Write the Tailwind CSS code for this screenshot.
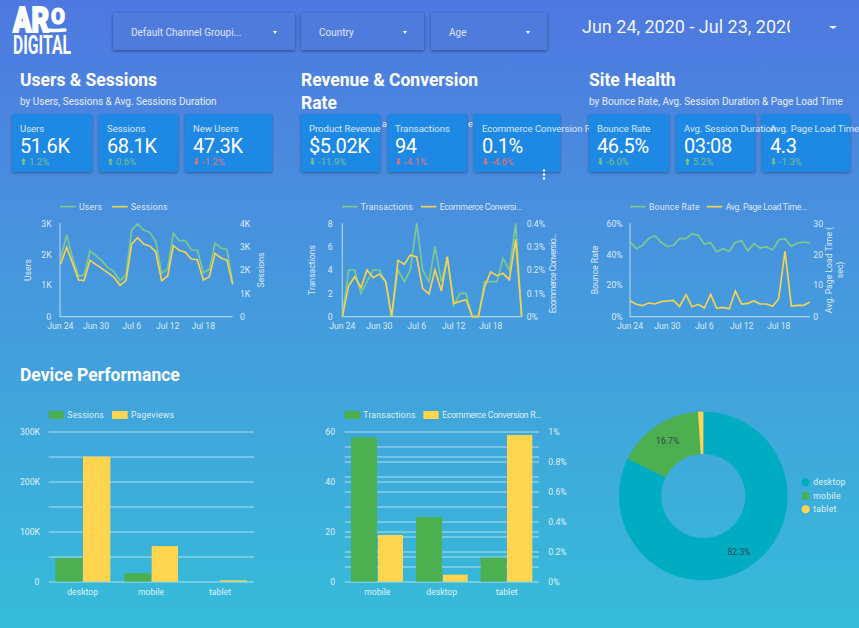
<!DOCTYPE html>
<html>
<head>
<meta charset="utf-8">
<script src="https://cdn.jsdelivr.net/npm/@tailwindcss/browser@4"></script>
</head>
<body class="m-0">
<div class="relative w-[859px] h-[628px] overflow-hidden bg-gradient-to-b from-[#4e78e0] to-[#34bcd8] font-['Roboto',sans-serif] text-white">

  <!-- Header -->
  <header class="flex items-start h-[68px]">
    <svg class="ml-3 mt-[6px] w-[60px] h-[50px] shrink-0 overflow-visible" viewBox="0 0 60 50" aria-label="ARO Digital logo">
      <text x="1" y="26" font-size="35" font-weight="900" fill="#fff" stroke="#fff" stroke-width="1.8" textLength="36" lengthAdjust="spacingAndGlyphs">AR</text>
      <text x="39" y="18" font-size="22" font-weight="900" fill="#fff" stroke="#fff" stroke-width="1" textLength="14" lengthAdjust="spacingAndGlyphs">O</text>
      <path d="M37 24 C43 25.500 49 24 53 24" stroke="#fff" stroke-width="3.500" stroke-linecap="round" fill="none"/>
      <text x="1" y="47.500" font-size="25.500" font-weight="700" fill="#fff" textLength="58" lengthAdjust="spacingAndGlyphs">DIGITAL</text>
    </svg>
    <div class="flex gap-[6px] ml-[41px] mt-[13px]">
      <div class="flex items-center justify-between w-[182px] h-[37px] pt-px pl-[18px] pr-[18px] bg-[#4f7bdd] shadow-[0_1px_3px_rgba(0,0,0,0.4)] text-[10px] text-white/80">
        <span>Default Channel Groupi...</span><span class="w-0 h-0 border-x-[2px] border-x-transparent border-t-[3px] border-t-white"></span>
      </div>
      <div class="flex items-center justify-between w-[123px] h-[37px] pt-px pl-[18px] pr-[17px] bg-[#4f7bdd] shadow-[0_1px_3px_rgba(0,0,0,0.4)] text-[10px] text-white/80">
        <span>Country</span><span class="w-0 h-0 border-x-[2px] border-x-transparent border-t-[3px] border-t-white"></span>
      </div>
      <div class="flex items-center justify-between w-[116px] h-[37px] ml-[1px] pt-px pl-[18px] pr-[17px] bg-[#4f7bdd] shadow-[0_1px_3px_rgba(0,0,0,0.4)] text-[10px] text-white/80">
        <span>Age</span><span class="w-0 h-0 border-x-[2px] border-x-transparent border-t-[3px] border-t-white"></span>
      </div>
    </div>
    <div class="ml-[35px] mt-[16px] w-[208px] h-[22px] overflow-hidden whitespace-nowrap text-[18px] leading-[22px] text-white/95">Jun 24, 2020 - Jul 23, 2020</div>
    <span class="ml-[39px] mt-[26px] w-0 h-0 border-x-[4px] border-x-transparent border-t-[3px] border-t-white"></span>
  </header>

  <!-- KPI sections -->
  <section class="flex h-[104px]">
    <div class="w-[301px] shrink-0">
      <div class="h-[46px] pl-5 pt-px">
        <h2 class="text-[17.5px] leading-[23px] font-bold">Users &amp; Sessions</h2>
        <p class="mt-[2px] text-[10px] leading-[16px] text-white/85">by Users, Sessions &amp; Avg. Sessions Duration</p>
      </div>
      <div class="flex pl-3 gap-[7px]">
        <div class="w-[80px] h-[58px] shrink-0 pl-2 pt-[9px] bg-[#1e88e5] rounded-[2px] shadow-[0_1px_3px_rgba(0,0,0,0.35)] whitespace-nowrap">
          <div class="text-[9.5px] leading-[12px] text-white/80">Users</div>
          <div class="text-[20px] leading-[23px] tracking-[-0.4px]">51.6K</div>
          <div class="flex items-center gap-[3px] -mt-[2px] pl-[1px] text-[9.5px] leading-[11px] text-[#74c487]"><svg class="w-[5px] h-[7px]" viewBox="0 0 5 7"><path d="M2.500 0 5 3H3.600V7H1.400V3H0Z" fill="#74c487"/></svg>1.2%</div>
        </div>
        <div class="w-[79px] h-[58px] shrink-0 pl-2 pt-[9px] bg-[#1e88e5] rounded-[2px] shadow-[0_1px_3px_rgba(0,0,0,0.35)] whitespace-nowrap">
          <div class="text-[9.5px] leading-[12px] text-white/80">Sessions</div>
          <div class="text-[20px] leading-[23px] tracking-[-0.4px]">68.1K</div>
          <div class="flex items-center gap-[3px] -mt-[2px] pl-[1px] text-[9.5px] leading-[11px] text-[#74c487]"><svg class="w-[5px] h-[7px]" viewBox="0 0 5 7"><path d="M2.500 0 5 3H3.600V7H1.400V3H0Z" fill="#74c487"/></svg>0.6%</div>
        </div>
        <div class="w-[87px] h-[58px] shrink-0 pl-2 pt-[9px] bg-[#1e88e5] rounded-[2px] shadow-[0_1px_3px_rgba(0,0,0,0.35)] whitespace-nowrap">
          <div class="text-[9.5px] leading-[12px] text-white/80">New Users</div>
          <div class="text-[20px] leading-[23px] tracking-[-0.4px]">47.3K</div>
          <div class="flex items-center gap-[3px] -mt-[2px] pl-[1px] text-[9.5px] leading-[11px] text-[#e57373]"><svg class="w-[5px] h-[7px]" viewBox="0 0 5 7"><path d="M2.500 7 5 4H3.600V0H1.400V4H0Z" fill="#e57373"/></svg>-1.2%</div>
        </div>
      </div>
    </div>

    <div class="w-[288px] shrink-0">
      <div class="h-[46px] pt-px">
        <h2 class="w-[200px] text-[17.5px] leading-[23px] font-bold">Revenue &amp; Conversion Rate</h2>
      </div>
      <div class="flex gap-[7px]">
        <div class="relative w-[79px] h-[58px] shrink-0 mr-[1px] pl-2 pt-[9px] bg-[#1e88e5] rounded-[2px] shadow-[0_1px_3px_rgba(0,0,0,0.35)] whitespace-nowrap">
          <div class="text-[9.5px] leading-[12px] text-white/80">Product Revenue</div>
          <div class="text-[20px] leading-[23px] tracking-[-0.4px]">$5.02K</div>
          <div class="flex items-center gap-[3px] -mt-[2px] pl-[1px] text-[9.5px] leading-[11px] text-[#74c487]"><svg class="w-[5px] h-[7px]" viewBox="0 0 5 7"><path d="M2.500 7 5 4H3.600V0H1.400V4H0Z" fill="#74c487"/></svg>-11.9%</div>
          <span class="absolute left-[81px] top-[5px] text-[9px] leading-[10px] text-white/85">a</span>
        </div>
        <div class="relative w-[79px] h-[58px] shrink-0 pl-[7px] pt-[9px] bg-[#1e88e5] rounded-[2px] shadow-[0_1px_3px_rgba(0,0,0,0.35)] whitespace-nowrap">
          <div class="text-[9.5px] leading-[12px] text-white/80">Transactions</div>
          <div class="text-[20px] leading-[23px] tracking-[-0.4px]">94</div>
          <div class="flex items-center gap-[3px] -mt-[2px] pl-[1px] text-[9.5px] leading-[11px] text-[#e57373]"><svg class="w-[5px] h-[7px]" viewBox="0 0 5 7"><path d="M2.500 7 5 4H3.600V0H1.400V4H0Z" fill="#e57373"/></svg>-4.1%</div>
          <span class="absolute left-[80px] top-[5px] text-[9px] leading-[10px] text-white/85">e</span>
        </div>
        <div class="relative w-[86px] h-[58px] shrink-0 pl-2 pt-[9px] bg-[#1e88e5] rounded-[2px] shadow-[0_1px_3px_rgba(0,0,0,0.35)] whitespace-nowrap">
          <div class="text-[9.5px] leading-[12px] text-white/80">Ecommerce Conversion Rate</div>
          <div class="text-[20px] leading-[23px] tracking-[-0.4px]">0.1%</div>
          <div class="flex items-center gap-[3px] -mt-[2px] pl-[1px] text-[9.5px] leading-[11px] text-[#e57373]"><svg class="w-[5px] h-[7px]" viewBox="0 0 5 7"><path d="M2.500 7 5 4H3.600V0H1.400V4H0Z" fill="#e57373"/></svg>-4.6%</div>
          <svg class="absolute left-[68px] top-[55px] w-[4px] h-[11px]" viewBox="0 0 4 11"><circle cx="2" cy="1.500" r="1.200" fill="#fff"/><circle cx="2" cy="5.500" r="1.200" fill="#fff"/><circle cx="2" cy="9.500" r="1.200" fill="#fff"/></svg>
        </div>
      </div>
    </div>

    <div class="relative w-[270px] shrink-0">
      <div class="h-[46px] pt-px">
        <h2 class="text-[17.5px] leading-[23px] font-bold">Site Health</h2>
        <p class="mt-[2px] text-[10px] leading-[16px] text-white/85 whitespace-nowrap">by Bounce Rate, Avg. Session Duration &amp; Page Load Time</p>
      </div>
      <div class="flex gap-[7px]">
        <div class="w-[80px] h-[58px] shrink-0 pl-2 pt-[9px] bg-[#1e88e5] rounded-[2px] shadow-[0_1px_3px_rgba(0,0,0,0.35)] whitespace-nowrap">
          <div class="text-[9.5px] leading-[12px] text-white/80">Bounce Rate</div>
          <div class="text-[20px] leading-[23px] tracking-[-0.4px]">46.5%</div>
          <div class="flex items-center gap-[3px] -mt-[2px] pl-[1px] text-[9.5px] leading-[11px] text-[#74c487]"><svg class="w-[5px] h-[7px]" viewBox="0 0 5 7"><path d="M2.500 7 5 4H3.600V0H1.400V4H0Z" fill="#74c487"/></svg>-6.0%</div>
        </div>
        <div class="relative z-10 w-[79px] h-[58px] shrink-0 pl-2 pt-[9px] bg-[#1e88e5] rounded-[2px] shadow-[0_1px_3px_rgba(0,0,0,0.35)] whitespace-nowrap">
          <div class="text-[9.5px] leading-[12px] text-white/80">Avg. Session Duration</div>
          <div class="text-[20px] leading-[23px] tracking-[-0.4px]">03:08</div>
          <div class="flex items-center gap-[3px] -mt-[2px] pl-[1px] text-[9.5px] leading-[11px] text-[#74c487]"><svg class="w-[5px] h-[7px]" viewBox="0 0 5 7"><path d="M2.500 0 5 3H3.600V7H1.400V3H0Z" fill="#74c487"/></svg>5.2%</div>
        </div>
        <div class="w-[88px] h-[58px] shrink-0 pl-2 pt-[9px] bg-[#1e88e5] rounded-[2px] shadow-[0_1px_3px_rgba(0,0,0,0.35)] whitespace-nowrap">
          <div class="text-[9.5px] leading-[12px] text-white/80">Avg. Page Load Time</div>
          <div class="text-[20px] leading-[23px] tracking-[-0.4px]">4.3</div>
          <div class="flex items-center gap-[3px] -mt-[2px] pl-[1px] text-[9.5px] leading-[11px] text-[#74c487]"><svg class="w-[5px] h-[7px]" viewBox="0 0 5 7"><path d="M2.500 7 5 4H3.600V0H1.400V4H0Z" fill="#74c487"/></svg>-1.3%</div>
        </div>
      </div>
    </div>
  </section>

  <!-- Line charts -->
  <section class="flex mt-[18px] h-[150px]">
    <svg class="w-[290px] h-[150px] shrink-0" viewBox="0 0 870 450" font-size="26" fill="#fff" fill-opacity="0.82">
      <path d="M180 100V380H698" fill="none" stroke="#fff" stroke-opacity="0.55" stroke-width="3.500"/>
      <polyline fill="none" stroke="#7cc98f" stroke-width="5" points="182,205 200,135 218,205 236,258 252,255 270,183 288,197 305,212 323,232 342,245 360,272 378,255 395,120 413,102 431,120 449,127 467,153 485,250 503,236 520,130 538,152 556,152 574,180 592,180 610,248 628,238 645,160 663,174 681,178 698,280"/>
      <polyline fill="none" stroke="#f5d251" stroke-width="5" points="182,222 200,172 218,220 236,270 252,272 270,211 288,224 305,235 323,248 342,262 360,286 378,272 395,162 413,143 431,162 449,168 467,185 485,272 503,258 520,167 538,181 556,187 574,207 592,209 610,270 628,260 645,190 663,204 681,211 698,283"/>
      <path d="M181 50H228" stroke="#7cc98f" stroke-width="5"/><text x="237" y="59" letter-spacing="0.6">Users</text>
      <path d="M336 50H383" stroke="#f5d251" stroke-width="5"/><text x="393" y="59" letter-spacing="0.6">Sessions</text>
      <g text-anchor="end"><text x="155" y="111">3K</text><text x="155" y="203">2K</text><text x="155" y="295">1K</text><text x="153" y="390">0</text></g>
      <g><text x="720" y="111">4K</text><text x="720" y="181">3K</text><text x="720" y="250">2K</text><text x="720" y="320">1K</text><text x="720" y="390">0</text></g>
      <g text-anchor="middle"><text x="181" y="418">Jun 24</text><text x="288" y="418">Jun 30</text><text x="395" y="418">Jul 6</text><text x="503" y="418">Jul 12</text><text x="610" y="418">Jul 18</text>
        <text transform="translate(92 240) rotate(-90)">Users</text><text transform="translate(792 240) rotate(-90)">Sessions</text></g>
    </svg>
    <svg class="w-[280px] h-[150px] shrink-0" viewBox="0 0 840 450" font-size="26" fill="#fff" fill-opacity="0.82">
      <path d="M157 100V380H695" fill="none" stroke="#fff" stroke-opacity="0.55" stroke-width="3.500"/>
      <polyline fill="none" stroke="#7cc98f" stroke-width="5" points="157,380 176,240 194,240 213,310 231,275 250,240 268,240 287,275 305,380 324,240 343,275 361,240 380,100 398,240 417,275 435,170 454,275 472,205 491,345 510,310 528,310 547,380 565,380 584,275 602,275 621,275 639,205 658,240 677,100 695,380"/>
      <polyline fill="none" stroke="#f5d251" stroke-width="5" points="157,380 176,287 194,260 213,293 231,240 250,263 268,252 287,275 305,380 324,211 343,223 361,195 380,201 398,296 417,312 435,240 454,303 472,200 491,340 510,334 528,329 547,380 565,380 584,290 602,246 621,257 639,250 658,269 677,148 695,380"/>
      <path d="M157 50H203" stroke="#7cc98f" stroke-width="5"/><text x="212" y="59" letter-spacing="0.6">Transactions</text>
      <path d="M393 50H439" stroke="#f5d251" stroke-width="5"/><text x="449" y="59" textLength="248">Ecommerce Conversi...</text>
      <g text-anchor="end"><text x="128" y="111">8</text><text x="128" y="181">6</text><text x="128" y="250">4</text><text x="128" y="320">2</text><text x="128" y="390">0</text></g>
      <g><text x="710" y="111">0.4%</text><text x="710" y="181">0.3%</text><text x="710" y="250">0.2%</text><text x="710" y="320">0.1%</text><text x="710" y="390">0%</text></g>
      <g text-anchor="middle"><text x="157" y="418">Jun 24</text><text x="268" y="418">Jun 30</text><text x="380" y="418">Jul 6</text><text x="491" y="418">Jul 12</text><text x="602" y="418">Jul 18</text>
        <text transform="translate(75 240) rotate(-90)">Transactions</text><text transform="translate(797 250) rotate(-90)" textLength="240">Ecommerce Conversio...</text></g>
    </svg>
    <svg class="w-[289px] h-[150px] shrink-0" viewBox="0 0 867 450" font-size="26" fill="#fff" fill-opacity="0.82">
      <path d="M180 100V380H720" fill="none" stroke="#fff" stroke-opacity="0.55" stroke-width="3.500"/>
      <polyline fill="none" stroke="#7cc98f" stroke-width="5" points="180,155 199,176 217,167 236,145 255,137 273,156 292,170 310,166 329,146 348,146 366,131 385,136 403,163 422,158 440,185 459,176 478,184 496,157 515,152 533,183 552,161 570,174 589,170 608,180 626,150 645,146 664,169 682,159 701,156 720,159"/>
      <polyline fill="none" stroke="#f5d251" stroke-width="5" points="180,332 199,343 217,347 236,339 255,342 273,335 292,333 310,331 329,349 348,314 366,350 385,343 403,354 422,313 440,355 459,352 478,356 496,303 515,342 533,340 552,333 570,342 589,342 608,349 626,326 645,184 664,348 682,346 701,346 720,336"/>
      <path d="M180 50H227" stroke="#7cc98f" stroke-width="5"/><text x="237" y="59" letter-spacing="0.6">Bounce Rate</text>
      <path d="M410 50H457" stroke="#f5d251" stroke-width="5"/><text x="467" y="59" textLength="245">Avg. Page Load Time...</text>
      <g text-anchor="end"><text x="158" y="111">60%</text><text x="158" y="203">40%</text><text x="158" y="295">20%</text><text x="158" y="390">0%</text></g>
      <g><text x="730" y="111">30</text><text x="730" y="203">20</text><text x="730" y="295">10</text><text x="730" y="390">0</text></g>
      <g text-anchor="middle"><text x="180" y="418">Jun 24</text><text x="292" y="418">Jun 30</text><text x="403" y="418">Jul 6</text><text x="515" y="418">Jul 12</text><text x="626" y="418">Jul 18</text>
        <text transform="translate(83 240) rotate(-90)">Bounce Rate</text><text transform="translate(787 240) rotate(-90)">Avg. Page Load Time (</text><text transform="translate(820 240) rotate(-90)">sec)</text></g>
    </svg>
  </section>

  <div class="h-[60px] pl-5 pt-[24px]">
    <h2 class="text-[17.5px] leading-[23px] font-bold">Device Performance</h2>
  </div>

  <!-- Device charts -->
  <section class="flex h-[210px]">
    <svg class="w-[300px] h-[210px] shrink-0" viewBox="0 0 900 630" font-size="26" fill="#fff" fill-opacity="0.85">
      <path d="M146 96H762M146 171H762M146 246H762M146 321H762M146 396H762M146 471H762M146 546H762" stroke="#fff" stroke-opacity="0.4" stroke-width="4"/>
      <g fill-opacity="1">
        <rect x="166" y="474" width="81" height="71" fill="#4caf50"/><rect x="249" y="170" width="82" height="375" fill="#ffd54f"/>
        <rect x="373" y="520" width="80" height="25" fill="#4caf50"/><rect x="455" y="438" width="79" height="107" fill="#ffd54f"/>
        <rect x="660" y="541" width="81" height="4" fill="#ffd54f"/>
        <rect x="146" y="33" width="46" height="24" fill="#4caf50"/><rect x="336" y="33" width="47" height="24" fill="#ffd54f"/>
      </g>
      <text x="202" y="53" letter-spacing="0.6">Sessions</text><text x="393" y="53" letter-spacing="0.6">Pageviews</text>
      <g text-anchor="end"><text x="120" y="105">300K</text><text x="120" y="255">200K</text><text x="120" y="405">100K</text><text x="118" y="555">0</text></g>
      <g text-anchor="middle"><text x="248" y="585">desktop</text><text x="453" y="585">mobile</text><text x="660" y="585">tablet</text></g>
    </svg>
    <svg class="w-[280px] h-[210px] shrink-0" viewBox="0 0 840 630" font-size="26" fill="#fff" fill-opacity="0.85">
      <path d="M134 96H717M134 141H717M134 171H717M134 186H717M134 231H717M134 246H717M134 276H717M134 321H717M134 366H717M134 396H717M134 411H717M134 456H717M134 471H717M134 501H717M134 546H717" stroke="#fff" stroke-opacity="0.4" stroke-width="4"/>
      <g fill-opacity="1">
        <rect x="153" y="112" width="78" height="433" fill="#4caf50"/><rect x="234" y="405" width="75" height="140" fill="#ffd54f"/>
        <rect x="348" y="351" width="78" height="194" fill="#4caf50"/><rect x="429" y="524" width="74" height="21" fill="#ffd54f"/>
        <rect x="542" y="473" width="77" height="72" fill="#4caf50"/><rect x="621" y="105" width="76" height="440" fill="#ffd54f"/>
        <rect x="134" y="33" width="47" height="24" fill="#4caf50"/><rect x="370" y="33" width="46" height="24" fill="#ffd54f"/>
      </g>
      <text x="190" y="53" letter-spacing="0.6">Transactions</text><text x="427" y="53" textLength="298">Ecommerce Conversion R...</text>
      <g text-anchor="end"><text x="105" y="105">60</text><text x="105" y="255">40</text><text x="105" y="405">20</text><text x="105" y="555">0</text></g>
      <g><text x="745" y="105">1%</text><text x="745" y="195">0.8%</text><text x="745" y="285">0.6%</text><text x="745" y="375">0.4%</text><text x="745" y="465">0.2%</text><text x="745" y="555">0%</text></g>
      <g text-anchor="middle"><text x="232" y="585">mobile</text><text x="425" y="585">desktop</text><text x="620" y="585">tablet</text></g>
    </svg>
    <svg class="ml-[20px] w-[259px] h-[200px] shrink-0" viewBox="0 0 777 600" font-size="26">
      <path d="M310 35A253 253 0 1 1 83 176L197 232A126 126 0 1 0 310 162Z" fill="#00acc1"/>
      <path d="M83 176A253 253 0 0 1 294 35.500L302 162A126 126 0 0 0 197 232Z" fill="#4caf50"/>
      <path d="M294 35.500A253 253 0 0 1 310 35V162A126 126 0 0 0 302 162Z" fill="#ffd54f"/>
      <text x="203" y="133" text-anchor="middle" fill="#37474f">16.7%</text>
      <text x="417" y="466" text-anchor="middle" fill="#37474f">82.3%</text>
      <circle cx="617" cy="247" r="12" fill="#00acc1"/><circle cx="617" cy="288" r="12" fill="#4caf50"/><circle cx="617" cy="328" r="12" fill="#ffd54f"/>
      <g fill="#fff" fill-opacity="0.85" letter-spacing="0.6"><text x="640" y="256">desktop</text><text x="640" y="297">mobile</text><text x="640" y="337">tablet</text></g>
    </svg>
  </section>
</div>
</body>
</html>
